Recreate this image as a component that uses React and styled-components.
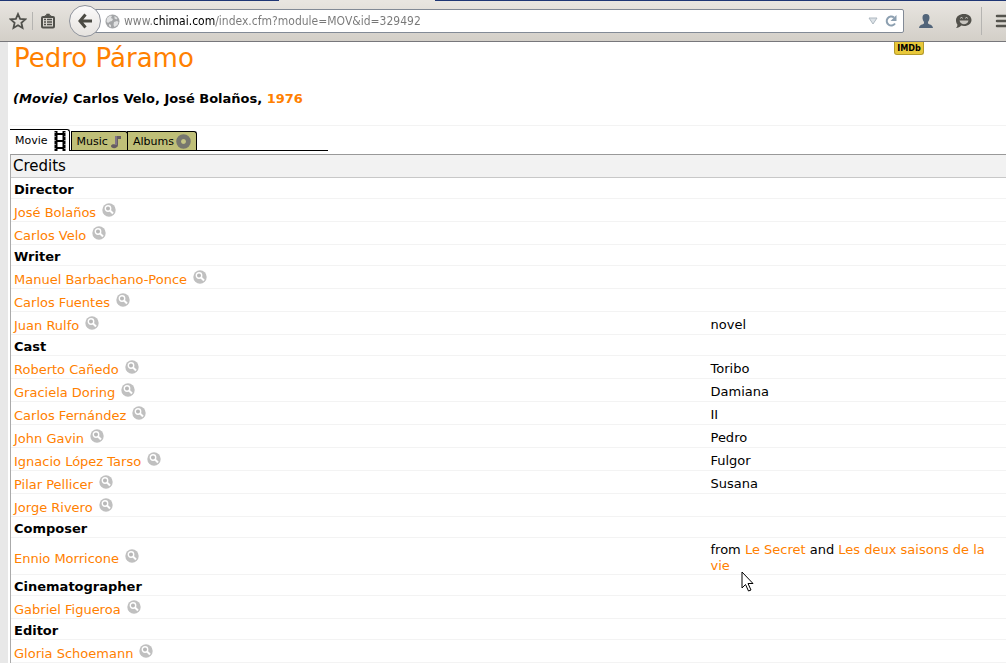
import React from "react";
import styled, { createGlobalStyle, css } from "styled-components";

const GlobalStyle = createGlobalStyle`
  * { box-sizing: border-box; }
  html { overflow: hidden; }
  body {
    margin: 0;
    background: #fff;
    color: #000;
    font: 13px/16px Verdana, "DejaVu Sans", sans-serif;
  }
`;

const TabStrip = styled.div`
  height: 1px;
  padding-left: 279px;
  background: #1f3674;
`;

const ActiveWindowTab = styled.div`
  width: 156px;
  height: 1px;
  background: #e8e5e0;
`;

const Toolbar = styled.header`
  display: flex;
  align-items: center;
  height: 41px;
  padding-left: 6px;
  overflow: hidden;
  background: linear-gradient(#e8e5e0, #d3cfc8);
  border-bottom: 1px solid #77777b;
`;

const ToolButton = styled.button`
  flex: none;
  display: flex;
  align-items: center;
  justify-content: ${(p) => (p.$start ? "flex-start" : "center")};
  width: ${(p) => p.$width || 24}px;
  height: 24px;
  padding: 0;
  border: 0;
  background: none;
  svg { flex: none; }
`;

const MenuButton = styled(ToolButton)`
  justify-content: flex-start;
  padding-left: 11px;
`;

const Separator = styled.span`
  flex: none;
  width: 1px;
  height: ${(p) => p.$height}px;
  margin: 0 2px;
  background: #b5b4b1;
`;

const BackButton = styled.button`
  flex: none;
  z-index: 1;
  display: flex;
  align-items: center;
  justify-content: center;
  width: 32px;
  height: 32px;
  margin: 0 -8px 0 8px;
  padding: 0;
  border: 1px solid #8f939c;
  border-radius: 50%;
  background: linear-gradient(#fbfafa, #e6e3df);
`;

const AddressBar = styled.form`
  flex: 1;
  min-width: 0;
  display: flex;
  align-items: center;
  height: 24px;
  padding-left: 11px;
  background: #fff;
  border: 1px solid #828a96;
  border-radius: 0 2px 2px 0;
`;

const AddressInput = styled.input`
  flex: 1;
  min-width: 0;
  height: 22px;
  margin-left: 4px;
  padding: 0;
  border: 0;
  outline: 0;
  font: 12px/22px Tahoma, "DejaVu Sans Condensed", "DejaVu Sans", sans-serif;
  color: transparent;
  background: linear-gradient(to right, #777 30px, #000 30px, #000 91px, #777 91px);
  -webkit-background-clip: text;
  background-clip: text;
`;

const Page = styled.main`
  border-left: 8px solid #e8e8e8;
  padding-left: 2px;
`;

const TitleRow = styled.div`
  display: flex;
  align-items: flex-start;
  justify-content: space-between;
  padding: 0 82px 0 4px;
`;

const Title = styled.h1`
  margin: 0;
  font-size: 26px;
  font-weight: 400;
  line-height: 32px;
  color: #ff8000;
`;

const ImdbLink = styled.a`
  width: 30px;
  height: 13px;
  border: 1px solid #b49a2c;
  border-top: 0;
  border-radius: 0 0 3px 3px;
  background: #e8c83a;
  color: #000;
  font: bold 9px/12px "DejaVu Sans Condensed", sans-serif;
  text-align: center;
  text-decoration: none;
`;

const Subtitle = styled.h2`
  margin: 0;
  padding: 17px 4px 18px 3px;
  border-bottom: 1px solid #f3f3f3;
  font-size: 13px;
  line-height: 16px;
`;

const Link = styled.a`
  color: #ff8000;
  text-decoration: none;
`;

const TabBar = styled.nav`
  display: flex;
  align-items: flex-end;
  width: 318px;
  height: 22px;
  margin: 3px 0;
  border-bottom: 1px solid #000;
`;

const Tab = styled.a`
  display: flex;
  align-items: center;
  gap: 2px;
  height: 19px;
  padding: 1px 5px 0;
  border: 1px solid #000;
  border-bottom: 0;
  border-radius: 0 3px 0 0;
  background: #bfbf78;
  color: #000;
  font-size: 11px;
  line-height: 16px;
  text-decoration: none;
  & + & { margin-left: -1px; }
  ${(p) =>
    p.$active &&
    css`
      gap: 6px;
      height: 22px;
      margin-bottom: -1px;
      margin-right: 2px;
      padding: 0 3px 0 5px;
      border-left: 0;
      background: #fff;
    `}
`;

const Credits = styled.table`
  width: 100%;
  table-layout: fixed;
  border-collapse: separate;
  border-spacing: 0;
  border-left: 1px solid #aaa;
  border-top: 1px solid #999;
`;

const WideColumn = styled.col`
  width: 70%;
`;

const Caption = styled.th`
  height: 23px;
  padding: 1px 2px 0;
  background: #f2f2f2;
  border-bottom: 1px solid #c8c8c8;
  font-size: 15px;
  font-weight: 400;
  line-height: 21px;
  text-align: left;
`;

const RoleCell = styled.th`
  height: 21px;
  padding: 4px 3px 0;
  border-bottom: 1px solid #f3f3f3;
  line-height: 16px;
  text-align: left;
`;

const Cell = styled.td`
  position: relative;
  height: 23px;
  padding: 4px 3px 0;
  border-bottom: 1px solid #f3f3f3;
  line-height: 16px;
`;

const Person = styled.div`
  display: flex;
  align-items: flex-end;
  gap: 6px;
  height: 18px;
  line-height: 16px;
`;

const SearchButton = styled.button`
  width: 14px;
  height: 14px;
  margin-bottom: 4px;
  padding: 0;
  border: 0;
  background: none;
  svg { display: block; }
`;

const Pointer = styled.svg`
  position: absolute;
  left: 33px;
  top: 33px;
  z-index: 2;
`;

const StarIcon = () => (
  <svg width="18" height="18" viewBox="0 0 18 18">
    <path d="M9 2l2.1 4.8 5.2.5-3.9 3.5 1.1 5.1L9 13.200l-4.500 2.700 1.100-5.100L1.700 7.300l5.200-.5z" fill="none" stroke="#50504b" strokeWidth="1.800" />
  </svg>
);

const ClipboardIcon = () => (
  <svg width="16" height="16" viewBox="0 0 16 16" fill="none" stroke="#50504b">
    <rect x="2" y="4" width="12" height="10.500" rx="1" strokeWidth="2" />
    <path d="M4 6.500h2M7 6.500h5M4 9h2M7 9h5M4 11.500h2M7 11.500h5" strokeWidth="1.300" />
    <path d="M5 4V2.500h1.500V1h3v1.500H11V4z" fill="#50504b" strokeWidth=".6" />
  </svg>
);

const BackIcon = () => (
  <svg width="16" height="16" viewBox="0 0 16 16" fill="none" stroke="#4b4a43" strokeWidth="3">
    <path d="M8.500 1.500L3 8l5.500 6.500M3 8h12" />
  </svg>
);

const GlobeIcon = () => (
  <svg width="15" height="15" viewBox="0 0 15 15">
    <circle cx="7.500" cy="7.500" r="7" fill="#a3a5a7" />
    <path d="M2 4l3-2.500 2 .5-1 2 2 1-1 2-2 .5L3 9 1.500 7.500zM9 8l3-1 1.500 1-1 3-3 2-1-2zM9.500 2l3 2-1 1.500-2-1zM4 10l2 1v2.500L4 12z" fill="#e1e2e3" />
  </svg>
);

const ReloadIcon = () => (
  <svg width="14" height="14" viewBox="0 0 14 14">
    <path d="M11 9.500A4.500 4.500 0 1 1 10 3.500" fill="none" stroke="#8c9fb0" strokeWidth="2" />
    <path d="M12.500 1v6h-6z" fill="#8c9fb0" />
  </svg>
);

const UserIcon = () => (
  <svg width="16" height="16" viewBox="0 0 16 16">
    <path d="M8 1c2.500 0 3.600 1.600 3.500 4-.1 2-1 3-1.500 4v1.500c1 1 4.500 1 5 4.500H1c.5-3.500 4-3.500 5-4.500V9C5.500 8 4.600 7 4.500 5 4.400 2.600 5.500 1 8 1z" fill="#52657a" />
  </svg>
);

const ChatIcon = () => (
  <svg width="17" height="16" viewBox="0 0 17 16">
    <path d="M9 1c4.500 0 7.500 2.600 7.500 6S13.500 13 9 13c-1 0-2-.1-2.800-.4C5 14 3 15 1 15c1.300-1 1.500-2.500 1.300-3.700C1.300 10.200 1 8.700 1 7c0-3.400 3.500-6 8-6z" fill="#52514b" />
    <path d="M4.500 7.500h9C13 10 11 11.200 9 11.200S5 10 4.500 7.500z" fill="#c9c6c0" />
    <path d="M5.500 5.500l1-1.500 1 1.500M10.500 5.500l1-1.500 1 1.500" stroke="#c9c6c0" fill="none" />
  </svg>
);

const MenuIcon = () => (
  <svg width="18" height="16" viewBox="0 0 18 16">
    <path d="M2 3h15M2 8h15M2 13h15" stroke="#55544e" strokeWidth="2.500" strokeLinecap="round" />
  </svg>
);

const FilmIcon = () => (
  <svg width="12" height="20" viewBox="0 0 12 20">
    <path d="M2 0v20M10 0v20" stroke="#000" strokeWidth="3" />
    <path d="M2 3h8M2 10h8M2 17h8" stroke="#000" strokeWidth="2" />
    <path d="M1 1v19M11 1v19" stroke="#fff" strokeWidth="1" strokeDasharray="1 3" />
  </svg>
);

const NoteIcon = () => (
  <svg width="12" height="14" viewBox="0 0 12 14">
    <path d="M5 1h6v3H8v6c0 4-7 4-7 1C1 9.500 3.500 9 5 9.500z" fill="#665d62" />
    <path d="M6 1v9" stroke="#9b8cab" />
  </svg>
);

const DiscIcon = () => (
  <svg width="15" height="15" viewBox="0 0 15 15">
    <circle cx="7.500" cy="7.500" r="4.750" fill="none" stroke="#77776f" strokeWidth="5" />
    <circle cx="7.500" cy="7.500" r="2.300" fill="#c5c586" />
  </svg>
);

const SearchIcon = () => (
  <svg width="14" height="14" viewBox="0 0 14 14">
    <circle cx="7" cy="7" r="6.700" fill="#c0c0c0" />
    <circle cx="6" cy="5.500" r="2.700" fill="#b8b8b8" stroke="#fff" strokeWidth="1.400" />
    <path d="M8 7.500l3 3" stroke="#fff" strokeWidth="2" />
  </svg>
);

const credits = [
  { role: "Director", people: [["José Bolaños"], ["Carlos Velo"]] },
  { role: "Writer", people: [["Manuel Barbachano-Ponce"], ["Carlos Fuentes"], ["Juan Rulfo", "novel"]] },
  {
    role: "Cast",
    people: [
      ["Roberto Cañedo", "Toribo"],
      ["Graciela Doring", "Damiana"],
      ["Carlos Fernández", "II"],
      ["John Gavin", "Pedro"],
      ["Ignacio López Tarso", "Fulgor"],
      ["Pilar Pellicer", "Susana"],
      ["Jorge Rivero"],
    ],
  },
  {
    role: "Composer",
    people: [
      [
        "Ennio Morricone",
        <>
          from <Link href="#secret">Le Secret</Link> and <Link href="#saisons">Les deux saisons de la vie</Link>
          <Pointer width="13" height="22" viewBox="0 0 13 22">
            <path d="M1 1v16l3.500-3.500L7.500 20l2.500-1-3-6.500h5z" fill="#fff" stroke="#000" />
          </Pointer>
        </>,
      ],
    ],
  },
  { role: "Cinematographer", people: [["Gabriel Figueroa"]] },
  { role: "Editor", people: [["Gloria Schoemann"]] },
];

export default function App() {
  return (
    <>
      <GlobalStyle />
      <TabStrip><ActiveWindowTab /></TabStrip>
      <Toolbar>
        <ToolButton aria-label="Bookmark"><StarIcon /></ToolButton>
        <Separator $height={18} />
        <ToolButton $width={26} aria-label="Bookmarks list"><ClipboardIcon /></ToolButton>
        <BackButton aria-label="Back"><BackIcon /></BackButton>
        <AddressBar>
          <GlobeIcon />
          <AddressInput aria-label="Address" defaultValue="www.chimai.com/index.cfm?module=MOV&id=329492" />
          <ToolButton type="button" $width={12} aria-label="History">
            <svg width="10" height="8" viewBox="0 0 10 8"><path d="M1 1h8L5 7z" fill="#dce2e7" stroke="#aeb8c1" /></svg>
          </ToolButton>
          <ToolButton type="button" aria-label="Reload"><ReloadIcon /></ToolButton>
        </AddressBar>
        <ToolButton $width={43} aria-label="Account"><UserIcon /></ToolButton>
        <ToolButton $width={32} aria-label="Chat"><ChatIcon /></ToolButton>
        <Separator $height={28} />
        <MenuButton $width={22} aria-label="Menu"><MenuIcon /></MenuButton>
      </Toolbar>
      <Page>
        <TitleRow>
          <Title>Pedro Páramo</Title>
          <ImdbLink href="#imdb">IMDb</ImdbLink>
        </TitleRow>
        <Subtitle>
          <em>(Movie)</em> Carlos Velo, José Bolaños, <Link href="#1976">1976</Link>
        </Subtitle>
        <TabBar>
          <Tab href="#movie" $active>Movie <FilmIcon /></Tab>
          <Tab href="#music">Music <NoteIcon /></Tab>
          <Tab href="#albums">Albums <DiscIcon /></Tab>
        </TabBar>
        <Credits>
          <colgroup>
            <WideColumn />
            <col />
          </colgroup>
          <thead>
            <tr><Caption colSpan={2}>Credits</Caption></tr>
          </thead>
          {credits.map(({ role, people }) => (
            <tbody key={role}>
              <tr><RoleCell colSpan={2}>{role}</RoleCell></tr>
              {people.map(([name, part]) => (
                <tr key={name}>
                  <Cell>
                    <Person>
                      <Link href="#person">{name}</Link>
                      <SearchButton aria-label={`Search ${name}`}><SearchIcon /></SearchButton>
                    </Person>
                  </Cell>
                  <Cell>{part}</Cell>
                </tr>
              ))}
            </tbody>
          ))}
        </Credits>
      </Page>
    </>
  );
}
